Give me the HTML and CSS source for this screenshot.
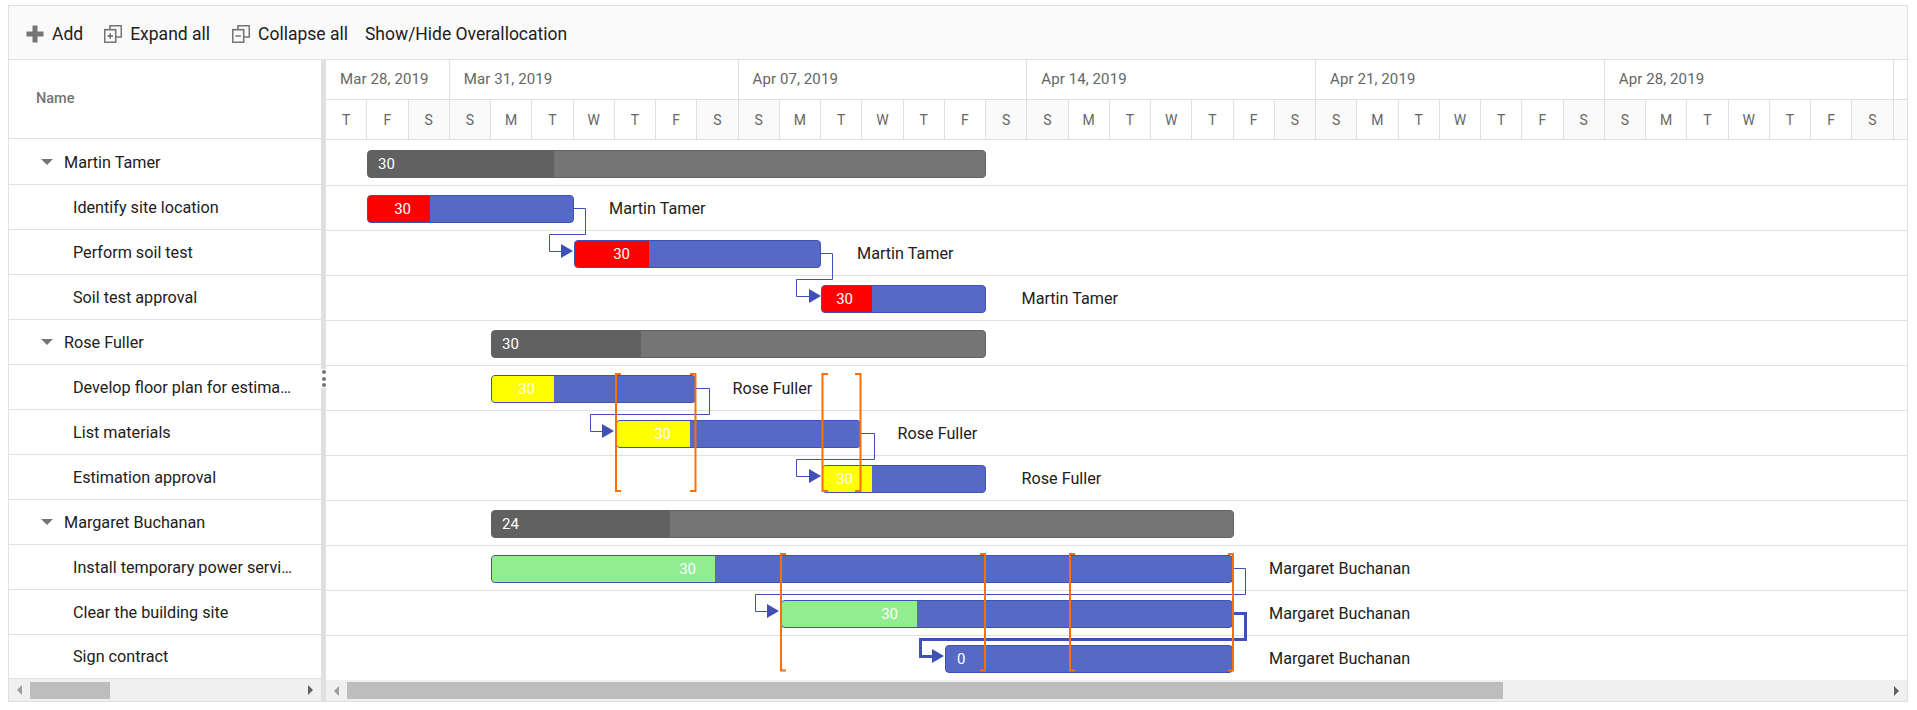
FILE: index.html
```html
<!DOCTYPE html>
<html lang="en">
<head>
<meta charset="utf-8">
<title>Gantt</title>
<link rel="stylesheet" href="styles.css">
</head>
<body>
<div class="gantt">
  <div class="toolbar">
    <div class="tool tool-add">
      <svg class="ic" width="18" height="18" viewBox="0 0 18 18"><path class="ic-fill" d="M6.5 0.5h5v6h6v5h-6v6h-5v-6h-6v-5h6z"/></svg>
      <span>Add</span>
    </div>
    <div class="tool tool-expand">
      <svg class="ic" width="18" height="18" viewBox="0 0 18 18"><path class="ic-line" d="M6 4V0.7H17.3V12H12"/><rect class="ic-line" x="0.7" y="4.7" width="11" height="12.6"/><path class="ic-thin" d="M3.5 11h5.5M6.2 8.2v5.6"/></svg>
      <span>Expand all</span>
    </div>
    <div class="tool tool-collapse">
      <svg class="ic" width="18" height="18" viewBox="0 0 18 18"><path class="ic-line" d="M6 4V0.7H17.3V12H12"/><rect class="ic-line" x="0.7" y="4.7" width="11" height="12.6"/><path class="ic-thin" d="M3.5 11h5.5"/></svg>
      <span>Collapse all</span>
    </div>
    <div class="tool"><span>Show/Hide Overallocation</span></div>
  </div>
  <div class="panes">
    <div class="tree">
      <div class="tree-head">Name</div>
      <div class="tree-body">
        <div class="tree-row first parent"><i class="caret"></i><span class="cell">Martin Tamer</span></div>
        <div class="tree-row child"><span class="cell">Identify site location</span></div>
        <div class="tree-row child"><span class="cell">Perform soil test</span></div>
        <div class="tree-row child"><span class="cell">Soil test approval</span></div>
        <div class="tree-row parent"><i class="caret"></i><span class="cell">Rose Fuller</span></div>
        <div class="tree-row child"><span class="cell">Develop floor plan for estimation</span></div>
        <div class="tree-row child"><span class="cell">List materials</span></div>
        <div class="tree-row child"><span class="cell">Estimation approval</span></div>
        <div class="tree-row parent"><i class="caret"></i><span class="cell">Margaret Buchanan</span></div>
        <div class="tree-row child"><span class="cell">Install temporary power service</span></div>
        <div class="tree-row child"><span class="cell">Clear the building site</span></div>
        <div class="tree-row child last"><span class="cell">Sign contract</span></div>
      </div>
      <div class="scroll scroll-tree">
        <div class="sarrow"><i class="tri-l"></i></div>
        <div class="thumb thumb-tree"></div>
        <div class="spacer"></div>
        <div class="sarrow sarrow-r"><i class="tri-r"></i></div>
      </div>
    </div>
    <div class="splitter"><div class="handle"><i></i><i></i><i></i></div></div>
    <div class="chart">
      <div class="tier tier-top">
        <div class="wk wk3">Mar 28, 2019</div>
        <div class="wk">Mar 31, 2019</div>
        <div class="wk">Apr 07, 2019</div>
        <div class="wk">Apr 14, 2019</div>
        <div class="wk">Apr 21, 2019</div>
        <div class="wk">Apr 28, 2019</div>
        <div class="wk wk-end"></div>
      </div>
      <div class="tier tier-days">
        <div class="day">T</div><div class="day">F</div><div class="day we">S</div>
        <div class="day we">S</div><div class="day">M</div><div class="day">T</div><div class="day">W</div><div class="day">T</div><div class="day">F</div><div class="day we">S</div>
        <div class="day we">S</div><div class="day">M</div><div class="day">T</div><div class="day">W</div><div class="day">T</div><div class="day">F</div><div class="day we">S</div>
        <div class="day we">S</div><div class="day">M</div><div class="day">T</div><div class="day">W</div><div class="day">T</div><div class="day">F</div><div class="day we">S</div>
        <div class="day we">S</div><div class="day">M</div><div class="day">T</div><div class="day">W</div><div class="day">T</div><div class="day">F</div><div class="day we">S</div>
        <div class="day we">S</div><div class="day">M</div><div class="day">T</div><div class="day">W</div><div class="day">T</div><div class="day">F</div><div class="day we">S</div>
        <div class="day we day-end"></div>
      </div>
      <div class="canvas">
        <div class="row">
          <div class="bar bar-parent" style="left:41px;width:619px"><div class="prog prog-parent" style="width:186px"></div><span class="bar-num">30</span></div>
        </div>
        <div class="row">
          <div class="bar" style="left:41px;width:207px"><div class="prog prog-red" style="width:62px">30</div></div>
          <span class="res" style="left:283px">Martin Tamer</span>
        </div>
        <div class="row">
          <div class="bar" style="left:248px;width:247px"><div class="prog prog-red" style="width:74px">30</div></div>
          <span class="res" style="left:531px">Martin Tamer</span>
        </div>
        <div class="row">
          <div class="bar" style="left:495px;width:165px"><div class="prog prog-red" style="width:50px">30</div></div>
          <span class="res" style="left:695.5px">Martin Tamer</span>
        </div>
        <div class="row">
          <div class="bar bar-parent" style="left:165px;width:495px"><div class="prog prog-parent" style="width:149px"></div><span class="bar-num">30</span></div>
        </div>
        <div class="row">
          <div class="bar" style="left:165px;width:205px"><div class="prog prog-yellow" style="width:62px">30</div></div>
          <span class="res" style="left:406.5px">Rose Fuller</span>
        </div>
        <div class="row">
          <div class="bar" style="left:290px;width:245px"><div class="prog prog-yellow" style="width:73px">30</div></div>
          <span class="res" style="left:571.5px">Rose Fuller</span>
        </div>
        <div class="row">
          <div class="bar" style="left:496px;width:164px"><div class="prog prog-yellow" style="width:49px">30</div></div>
          <span class="res" style="left:695.5px">Rose Fuller</span>
        </div>
        <div class="row">
          <div class="bar bar-parent" style="left:165px;width:743px"><div class="prog prog-parent" style="width:178px"></div><span class="bar-num">24</span></div>
        </div>
        <div class="row">
          <div class="bar" style="left:165px;width:742px"><div class="prog prog-green" style="width:223px">30</div></div>
          <span class="res" style="left:943px">Margaret Buchanan</span>
        </div>
        <div class="row">
          <div class="bar" style="left:455px;width:452px"><div class="prog prog-green" style="width:135px">30</div></div>
          <span class="res" style="left:943px">Margaret Buchanan</span>
        </div>
        <div class="row">
          <div class="bar" style="left:619px;width:288px"><span class="bar-num">0</span></div>
          <span class="res" style="left:943px">Margaret Buchanan</span>
        </div>
        <svg class="overlay" width="1581" height="540" viewBox="326 140 1581 540">
          <g class="link">
            <path d="M574 208.5H585.5V234.5H549.5V251.5H562"/>
            <path d="M821 253.5H832.5V279.5H796.5V296.5H809"/>
            <path d="M695.5 388.5H709.5V414.5H590.5V431.5H602"/>
            <path d="M860.5 433.5H874.5V459.5H796.5V476.5H809"/>
            <path d="M1232.5 568.5H1245.5V594.5H755.5V611.5H767"/>
          </g>
          <path class="link-bold" d="M1233 613.5H1245.5V639.5H920.5V656.5H932"/>
          <g class="head">
            <polygon points="561,244 573,251 561,258"/>
            <polygon points="809,289 821,296 809,303"/>
            <polygon points="602,424 614,431 602,438"/>
            <polygon points="809,469 821,476 809,483"/>
            <polygon points="767,604 779,611 767,618"/>
            <polygon points="932,649 944,656 932,663"/>
          </g>
          <g class="bracket">
            <path d="M621 374H616V491H621"/>
            <path d="M690 374H695.5V491H690"/>
            <path d="M828 374H822.5V491H828"/>
            <path d="M855 374H860.5V491H855"/>
            <path d="M786 554H781V670.5H786"/>
            <path d="M980 554H985V670.5H980"/>
            <path d="M1075 554H1070V670.5H1075"/>
            <path d="M1228 554H1233V670.5H1228"/>
          </g>
        </svg>
      </div>
      <div class="scroll scroll-chart">
        <div class="sarrow"><i class="tri-l"></i></div>
        <div class="thumb thumb-chart"></div>
        <div class="spacer"></div>
        <div class="sarrow sarrow-r"><i class="tri-r"></i></div>
      </div>
    </div>
  </div>
</div>
</body>
</html>
```
FILE: styles.css
```css
* { box-sizing: border-box; }
html, body { background: #fff; }
body { margin: 5px 0 0 8px; font-family: Roboto, "Liberation Sans", sans-serif; color: #212121; font-size: 16.2px; }
.gantt { width: 1900px; border: 1px solid #e0e0e0; }

.toolbar { height: 54px; background: #fafafa; border-bottom: 1px solid #e0e0e0; display: flex; align-items: center; padding: 2px 0 0 17px; font-size: 17.5px; }
.tool { display: flex; align-items: center; gap: 8px; }
.tool-add { margin-right: 21px; }
.tool-expand { margin-right: 22px; }
.tool-collapse { margin-right: 17px; }
.ic { display: block; flex: none; }
.ic-fill { fill: #757575; }
.ic-line { fill: none; stroke: #757575; stroke-width: 1.6; }
.ic-thin { fill: none; stroke: #616161; stroke-width: 1.3; }

.panes { display: flex; height: 641px; }
.tree { width: 312px; flex: none; display: flex; flex-direction: column; }
.tree-head { height: 79px; border-bottom: 1px solid #e0e0e0; display: flex; align-items: center; padding: 0 0 2px 27px; color: #757575; font-size: 14.5px; font-weight: 500; }
.tree-body { height: 539px; }
.tree-row { height: 45px; border-bottom: 1px solid #e0e0e0; display: flex; align-items: center; }
.tree-row.first { height: 46px; padding-top: 1px; }
.tree-row.last { height: 43px; border-bottom: 0; }
.child { padding: 0 28px 0 64px; }
.parent { padding: 0 28px 0 32px; }
.cell { white-space: nowrap; overflow: hidden; text-overflow: ellipsis; }
.caret { width: 0; height: 0; border-left: 6px solid transparent; border-right: 6px solid transparent; border-top: 6px solid #757575; margin-right: 11px; flex: none; }

.splitter { width: 5px; flex: none; background: #e0e0e0; position: relative; }
.handle { position: absolute; left: 0; top: 309px; width: 5px; height: 19px; background: #fff; display: flex; flex-direction: column; justify-content: space-between; align-items: flex-end; padding: 1px 0; }
.handle i { width: 4px; height: 4px; border-radius: 50%; background: #757575; }

.chart { width: 1581px; flex: none; display: flex; flex-direction: column; overflow: hidden; }
.tier { display: flex; height: 40px; border-bottom: 1px solid #e0e0e0; flex: none; color: #666; font-size: 14px; }
.wk { width: 288.75px; flex: none; border-right: 1px solid #e0e0e0; padding-left: 14px; display: flex; align-items: center; font-size: 15px; letter-spacing: 0.1px; padding-bottom: 1px; }
.wk3 { width: 123.75px; }
.wk-end { width: 12px; border-right: 0; background: #fff; }
.day { width: 41.25px; flex: none; border-right: 1px solid #e0e0e0; display: flex; align-items: center; justify-content: center; }
.we { background: #fafafa; }
.day-end { width: 12px; border-right: 0; }

.canvas { position: relative; height: 540px; flex: none; }
.row { position: relative; height: 45px; border-top: 1px solid #e0e0e0; }
.row:first-child { border-top-color: transparent; }
.bar { position: absolute; top: 9px; height: 28px; background: #5669c4; border: 1px solid #3f51b5; border-radius: 4px; overflow: hidden; color: #fff; font-size: 15px; display: flex; align-items: center; }
.bar-parent { background: #757575; border-color: #616161; }
.prog { height: 100%; display: flex; align-items: center; justify-content: flex-end; padding-right: 19px; flex: none; }
.prog-parent { background: #616161; padding: 0; }
.prog-red { background: #f00; }
.prog-yellow { background: #ff0; }
.prog-green { background: #90ee90; }
.bar-num { position: absolute; left: 10px; top: 50%; transform: translateY(-50%); }
.bar:not(.bar-parent) .bar-num { left: 11px; }
.res { position: absolute; top: 0; height: 44px; line-height: 46px; white-space: nowrap; }

.overlay { position: absolute; left: 0; top: 0; pointer-events: none; }
.link path { fill: none; stroke: #3f51b5; stroke-width: 1; }
.link-bold { fill: none; stroke: #3f51b5; stroke-width: 3; }
.head polygon { fill: #3f51b5; }
.bracket path { fill: none; stroke: #ff6f00; stroke-width: 2; }

.scroll { display: flex; flex: none; background: #f0f0f0; align-items: center; }
.scroll-tree { height: 23px; border-top: 1px solid #e0e0e0; }
.scroll-chart { height: 21px; }
.sarrow { width: 21px; flex: none; display: flex; align-items: center; justify-content: center; }
.spacer { flex: 1; }
.thumb { height: 17px; background: #bdbdbd; flex: none; }
.thumb-tree { width: 80px; }
.thumb-chart { width: 1156px; }
.tri-l { width: 0; height: 0; border-top: 5px solid transparent; border-bottom: 5px solid transparent; border-right: 5px solid #9e9e9e; }
.tri-r { width: 0; height: 0; border-top: 5px solid transparent; border-bottom: 5px solid transparent; border-left: 5px solid #616161; }
```
